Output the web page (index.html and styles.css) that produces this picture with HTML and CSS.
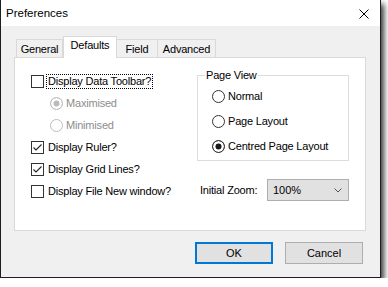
FILE: index.html
```html
<!DOCTYPE html>
<html lang="en">
<head>
    <meta charset="UTF-8">
    <title>Preferences</title>
    <link rel="stylesheet" href="styles.css">
</head>
<body>

<div class="window">
    <div class="titlebar">
        <span class="title">Preferences</span>
        <svg class="close" width="10" height="10" viewBox="0 0 10 10">
            <path d="M0.5 0.5 L9.5 9.5 M9.5 0.5 L0.5 9.5" stroke="#000" stroke-width="1" fill="none"/>
        </svg>
    </div>

    <div class="content">
        <div class="tabs">
            <div class="tab tab-general">General</div>
            <div class="tab tab-defaults active">Defaults</div>
            <div class="tab tab-field">Field</div>
            <div class="tab tab-advanced">Advanced</div>
        </div>

        <div class="panel">
            <div class="col-left">
                <div class="row">
                    <span class="check"></span>
                    <span class="label focus">Display Data Toolbar?</span>
                </div>
                <div class="row sub disabled">
                    <span class="radio on"></span>
                    <span class="label">Maximised</span>
                </div>
                <div class="row sub disabled">
                    <span class="radio"></span>
                    <span class="label">Minimised</span>
                </div>
                <div class="row">
                    <span class="check">
                        <svg width="11" height="11" viewBox="0 0 11 11"><polyline points="1.5,5.5 4,8 9.5,2.5" stroke="#222" stroke-width="1.1" fill="none"/></svg>
                    </span>
                    <span class="label">Display Ruler?</span>
                </div>
                <div class="row">
                    <span class="check">
                        <svg width="11" height="11" viewBox="0 0 11 11"><polyline points="1.5,5.5 4,8 9.5,2.5" stroke="#222" stroke-width="1.1" fill="none"/></svg>
                    </span>
                    <span class="label">Display Grid Lines?</span>
                </div>
                <div class="row">
                    <span class="check"></span>
                    <span class="label">Display File New window?</span>
                </div>
            </div>

            <div class="col-right">
                <div class="group">
                    <span class="group-title">Page View</span>
                    <div class="group-row">
                        <span class="radio"></span>
                        <span class="label">Normal</span>
                    </div>
                    <div class="group-row">
                        <span class="radio"></span>
                        <span class="label">Page Layout</span>
                    </div>
                    <div class="group-row">
                        <span class="radio on"></span>
                        <span class="label">Centred Page Layout</span>
                    </div>
                </div>

                <div class="zoom-row">
                    <span class="zoom-label">Initial Zoom:</span>
                    <div class="combo">
                        <span>100%</span>
                        <svg width="8" height="5" viewBox="0 0 8 5"><polyline points="0.5,0.5 4,4 7.5,0.5" stroke="#555" stroke-width="1" fill="none"/></svg>
                    </div>
                </div>
            </div>
        </div>

        <div class="buttons">
            <div class="btn default">OK</div>
            <div class="btn">Cancel</div>
        </div>
    </div>
</div>

</body>
</html>
```

FILE: styles.css
```css
/* page */
body {
    margin: 0;
    background: #fff;
    font-family: "Liberation Sans", Arial, sans-serif;
    font-size: 11px;
    line-height: 13px;
    color: #000;
}

/* window frame */
.window {
    box-sizing: border-box;
    width: 381px;
    height: 278px;
    border: 1px solid #1e1e1e;
    border-top: none;
    background: #f0f0f0;
    box-shadow: 3px 4px 6px rgba(0, 0, 0, 0.8);
}

.titlebar {
    height: 26px;
    background: #fff;
    display: flex;
    align-items: center;
    justify-content: space-between;
    padding: 0 11px 0 5px;
}

.title {
    font-size: 11.5px;
}

.close {
    display: block;
    margin-top: 1px;
}

.content {
    padding: 10px 14px 0 13px;
}

/* tabs */
.tabs {
    display: flex;
    align-items: flex-end;
    height: 22px;
    padding-left: 2px;
    margin-bottom: -1px;
    position: relative;
    z-index: 1;
}

.tab {
    box-sizing: border-box;
    height: 18px;
    margin-bottom: 1px;
    border: 1px solid #d9d9d9;
    border-bottom: none;
    background: #f0f0f0;
    text-align: center;
    line-height: 18px;
    letter-spacing: -0.2px;
}

.tab + .tab {
    border-left: none;
}

.tab.active {
    height: 22px;
    margin-bottom: 0;
    background: #fff;
    border-left: 1px solid #d9d9d9;
    line-height: 17px;
}

.tab.active + .tab {
    border-left: none;
}

.tab-general { width: 47px; }
.tab-defaults { width: 54px; }
.tab-field { width: 41px; }
.tab-advanced { width: 58px; }

/* panel */
.panel {
    box-sizing: border-box;
    width: 352px;
    height: 174px;
    border: 1px solid #d9d9d9;
    background: #fff;
    display: flex;
    padding: 12px 0 0 16px;
}

.col-left {
    width: 166px;
}

.col-right {
    width: 152px;
}

.row {
    display: flex;
    align-items: center;
    height: 22px;
}

.row.sub {
    padding-left: 19px;
}

.label {
    border: 1px solid transparent;
    padding: 0 1px;
    letter-spacing: -0.2px;
    white-space: nowrap;
}

.label.focus {
    border: 1px dotted #000;
}

.disabled .label {
    color: #8d8d8d;
}

/* check boxes and radios */
.check {
    box-sizing: border-box;
    width: 13px;
    height: 13px;
    border: 1px solid #333;
    background: #fff;
    margin-right: 2px;
    flex-shrink: 0;
}

.check svg {
    display: block;
}

.radio {
    box-sizing: border-box;
    width: 13px;
    height: 13px;
    border: 1px solid #333;
    border-radius: 50%;
    background: #fff;
    margin-right: 1px;
    flex-shrink: 0;
}

.radio.on {
    background: #1a1a1a;
    box-shadow: inset 0 0 0 2.5px #fff;
}

.disabled .radio {
    border-color: #bcbcbc;
}

.disabled .radio.on {
    background: #bcbcbc;
}

/* group box */
.group {
    position: relative;
    box-sizing: border-box;
    height: 86px;
    margin-top: 5px;
    border: 1px solid #dcdcdc;
    padding: 8px 0 0 14px;
}

.group-title {
    position: absolute;
    top: -7px;
    left: 7px;
    padding: 0 1px;
    background: #fff;
    letter-spacing: -0.2px;
}

.group-row {
    display: flex;
    align-items: center;
    height: 25px;
}

/* zoom combo */
.zoom-row {
    display: flex;
    align-items: center;
    margin-top: 18px;
}

.zoom-label {
    padding-left: 3px;
    letter-spacing: -0.2px;
}

.combo {
    box-sizing: border-box;
    margin-left: auto;
    width: 82px;
    height: 22px;
    border: 1px solid #adadad;
    background: #e1e1e1;
    display: flex;
    align-items: center;
    justify-content: space-between;
    padding: 0 6px 0 5px;
}

.combo svg {
    display: block;
}

/* buttons */
.buttons {
    display: flex;
    justify-content: flex-end;
    gap: 12px;
    margin-top: 11px;
    padding-right: 3px;
    width: 352px;
    box-sizing: border-box;
}

.btn {
    box-sizing: border-box;
    width: 78px;
    height: 22px;
    border: 1px solid #adadad;
    background: #e1e1e1;
    display: flex;
    align-items: center;
    justify-content: center;
}

.btn.default {
    border: 2px solid #0078d7;
}
```
